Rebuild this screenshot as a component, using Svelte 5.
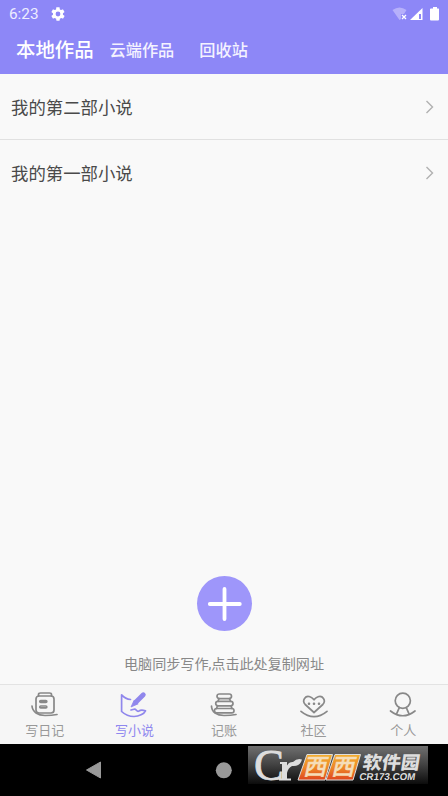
<script>
	const heads = ['本地作品', '云端作品', '回收站'];
	const novels = ['我的第二部小说', '我的第一部小说'];
	const tabs = [
		{ id: 'diary', label: '写日记' },
		{ id: 'novel', label: '写小说' },
		{ id: 'bill', label: '记账' },
		{ id: 'community', label: '社区' },
		{ id: 'me', label: '个人' }
	];
	let head = $state(0);
	let active = $state('novel');
</script>

<div class="phone">
	<header>
		<div class="status">
			<span class="time">6:23</span>
			<svg class="gear" width="16" height="16" viewBox="0 0 24 24">
				<path fill="#fff" fill-rule="evenodd" d="M19.4 13a7.6 7.6 0 0 0 0-2l2.1-1.6c.2-.2.3-.5.1-.7l-2-3.4c-.1-.2-.4-.3-.6-.2l-2.5 1a7.3 7.3 0 0 0-1.7-1l-.4-2.6c0-.3-.2-.5-.5-.5h-4c-.2 0-.5.2-.5.4L9.100 5.100c-.6.2-1.2.6-1.7 1l-2.5-1c-.2-.1-.5 0-.6.2l-2 3.4c-.1.2-.1.5.1.7L4.500 11a7.600 7.600 0 0 0 0 2l-2.1 1.6c-.2.2-.2.5-.1.7l2 3.4c.1.2.4.3.6.2l2.500-1c.5.4 1.1.8 1.7 1l.4 2.6c0 .3.3.5.5.5h4c.3 0 .5-.2.5-.5l.4-2.6c.6-.2 1.2-.6 1.7-1l2.500 1c.2.1.5 0 .6-.2l2-3.400c.1-.2.1-.5-.1-.7zM12 15.600a3.600 3.600 0 1 1 0-7.200 3.600 3.600 0 0 1 0 7.200z" />
			</svg>
			<svg class="signals" width="50" height="16" viewBox="0 0 50 16">
				<path d="M.5 4Q7.500-1 14.500 4L12 8H9v5L7.500 14z" fill="#b6b0fb" />
				<path d="M10 9l4 4M14 9l-4 4" stroke="#fff" stroke-width="1.3" />
				<path d="M18 14L30.500 2v12z" fill="#fff" />
				<path d="M27 8h2v5h-2z" fill="#8d87f7" />
				<path d="M39 2.500h2V1h4v1.500h1.500q.5 0 .5.500v10.500q0 1-1 1h-7q-1 0-1-1V3q0-.5 1-.5z" fill="#fff" />
			</svg>
		</div>
		<nav class="heads">
			{#each heads as name, i}
				<button class:current={head === i} onclick={() => (head = i)}>{name}</button>
			{/each}
		</nav>
	</header>

	<main>
		<ul>
			{#each novels as title}
				<li>
					<span>{title}</span>
					<svg width="10" height="16" viewBox="0 0 10 16">
						<path d="M1.500 2l6 6-6 6" fill="none" stroke="#b0b0b0" stroke-width="1.4" />
					</svg>
				</li>
			{/each}
		</ul>
		<div class="create">
			<button class="add" aria-label="新建">
				<svg width="55" height="55" viewBox="0 0 55 55">
					<path d="M27.500 13v30M12.800 28h30" stroke="#fff" stroke-width="3.8" stroke-linecap="round" />
				</svg>
			</button>
			<p>电脑同步写作,点击此处复制网址</p>
		</div>
	</main>

	<nav class="tabs">
		{#each tabs as tab}
			<button class:active={active === tab.id} onclick={() => (active = tab.id)}>
				<svg class="icon" width="30" height="30" viewBox="0 0 30 30">
					{#if tab.id === 'diary'}
						<path d="M8.500 6V4.500Q8.500 3 10.500 3h9q2 0 2 1.500V6" />
						<rect x="6" y="6" width="18" height="17" rx="3" />
						<rect x="9.800" y="10.600" width="7" height="1.800" rx=".9" />
						<rect x="9.800" y="16" width="7" height="1.800" rx=".9" />
						<path d="M2 16C2.500 22 8 25.500 15 25.500Q22 25.500 27 24.500" />
					{:else if tab.id === 'novel'}
						<path d="M11.500 9.500Q6.500 9 2.600 4.800V21.500Q8 26.500 15 26.500C20 26.500 25 24 26.500 20.800Q22 19.500 20 21C17.500 22.500 17.500 18.500 15 19.200L12 20" />
						<path d="M17 12L24.300 4.700" stroke-width="4.800" />
						<path d="M15 10.500L12 17 18.800 14z" class="nib" />
					{:else if tab.id === 'bill'}
						<rect x="8" y="4" width="14.500" height="4.600" rx="2.300" />
						<rect x="6.700" y="11.300" width="17.300" height="4.600" rx="2.300" />
						<rect x="5.500" y="18.500" width="19.500" height="4.300" rx="2.100" />
						<path d="M10 8.600l-1 2.700M20.500 8.600l1 2.700M8.500 15.900l-1 2.600M22 15.900l1 2.600" />
						<path d="M2.500 16C2.500 22 8 25.500 15 25.500Q22 25.500 27 24.500" />
					{:else if tab.id === 'community'}
						<path d="M15 22.500L6.200 14.500C2.500 10.500 6.500 5 11 6.800Q13 7.500 15 9.800Q17 7.500 19 6.800C23.500 5 27.500 10.500 23.800 14.500z" />
						<path d="M9.900 13.800h.2M14.900 13.800h.2M19.900 13.800h.2" stroke-width="2.400" />
						<path d="M2 21.300Q15 32 28 21.300" />
					{:else}
						<circle cx="14.800" cy="10.800" r="7.600" />
						<path d="M2.500 21Q14.800 30.500 27 21M11.300 17.600L8.700 23.700M18.300 17.600l2.600 6.100" />
					{/if}
				</svg>
				<span>{tab.label}</span>
			</button>
		{/each}
	</nav>

	<footer>
		<svg width="448" height="52" viewBox="0 0 448 52">
			<path d="M86.500 26L100.500 18v16z" fill="#999" stroke="#999" stroke-linejoin="round" />
			<circle cx="223.800" cy="26.300" r="8" fill="#999" />
		</svg>
		<svg class="brand" width="180" height="38" viewBox="0 0 180 38">
			<defs>
				<linearGradient id="plate" x2="0" y2="1">
					<stop stop-color="#707070" />
					<stop offset=".5" stop-color="#414141" />
					<stop offset="1" stop-color="#0c0c0c" />
				</linearGradient>
				<linearGradient id="orange" x2="0" y2="1">
					<stop stop-color="#f3ae2d" />
					<stop offset=".5" stop-color="#ee8928" />
					<stop offset="1" stop-color="#df461d" />
				</linearGradient>
			</defs>
			<rect width="180" height="38" fill="url(#plate)" />
			<text class="cap" x="6" y="34" textLength="30" lengthAdjust="spacingAndGlyphs">C</text>
			<path d="M32 16h7v16.500h4v2h-12v-2h3V18h-2zM38 22Q40 15.500 45 16Q49 12 54 13.500Q52 21 44 20Q40 22 39 27z" fill="#ddd" />
			<path d="M59 8.500h25.500L77 34H50z" fill="url(#orange)" stroke="#ddd" />
			<path d="M87 8.500h25.500L105 34H78z" fill="url(#orange)" stroke="#ddd" />
			<g transform="translate(55 28.500) skewX(-13)"><text class="west" textLength="23" lengthAdjust="spacingAndGlyphs">西</text></g>
			<g transform="translate(83 28.500) skewX(-13)"><text class="west" textLength="23" lengthAdjust="spacingAndGlyphs">西</text></g>
			<g transform="translate(114 22.500) skewX(-9)"><text class="soft" textLength="57" lengthAdjust="spacingAndGlyphs">软件园</text></g>
			<g transform="translate(111 34) skewX(-8)"><text class="domain" textLength="56" lengthAdjust="spacingAndGlyphs">CR173.COM</text></g>
		</svg>
	</footer>
</div>

<style>
	:global(body) { margin: 0; }
	.phone {
		width: 448px; height: 796px; overflow: hidden;
		display: flex; flex-direction: column;
		background: #f9f9f9; color: #4a4a4a;
		font-family: Roboto, "Noto Sans CJK SC", sans-serif;
	}
	button { border: 0; padding: 0; background: none; color: inherit; font: inherit; cursor: pointer; }
	svg { display: block; }
	header { height: 74px; flex: none; background: #8d87f7; color: #fff; }
	.status { height: 27px; display: flex; align-items: center; padding: 0 6px 0 9px; }
	.time { font-size: 15.3px; width: 41px; color: #eeedff; }
	.signals { margin-left: auto; }
	.heads { height: 48px; display: flex; align-items: center; padding-left: 16px; }
	.heads button { font-size: 16.2px; font-weight: 500; margin-right: 25px; line-height: 28px; color: #f4f2ff; }
	.heads .current { font-size: 19.4px; margin-right: 16px; color: #fff; }
	main { flex: 1; display: flex; flex-direction: column; }
	ul { list-style: none; margin: 0; padding: 0; }
	li {
		height: 65px; display: flex; align-items: center; justify-content: space-between;
		padding: 0 13px 0 11px; border-bottom: 1px solid #e1e1e1; font-size: 17.4px;
	}
	li:last-child { border-color: transparent; }
	.create { margin-top: auto; display: flex; flex-direction: column; align-items: center; color: #888; }
	.add { width: 55px; height: 55px; border-radius: 50%; background: #9e96fa; }
	.create p { margin: 23px 0 9px; font-size: 14.1px; line-height: 21px; }
	.tabs {
		height: 59px; flex: none; display: flex; background: #f6f6f6;
		border-top: 1px solid #e3e3e3; color: #999;
	}
	.tabs button { flex: 1; display: flex; flex-direction: column; align-items: center; justify-content: flex-start; padding-top: 5px; }
	.tabs span { font-size: 13px; line-height: 21px; }
	.icon { fill: none; stroke: #888; stroke-width: 1.7; stroke-linecap: round; stroke-linejoin: round; }
	.active { color: #8f88ef; }
	.active .icon { stroke: #9087ec; }
	.nib { fill: #9087ec; stroke-width: .8; }
	footer { height: 52px; flex: none; position: relative; background: #000; }
	/* site mark sits over the system bar */
	.brand { position: absolute; left: 248px; top: 2px; overflow: visible; }
	.cap { font: 44px "Liberation Serif", serif; fill: #ddd; stroke: #ddd; stroke-width: .8; }
	.west { font: 500 23px "Noto Sans CJK SC", sans-serif; fill: #f5ddb8; stroke: #f5ddb8; stroke-width: .5; }
	.soft { font: 900 18px "Noto Sans CJK SC", sans-serif; fill: #ddd; }
	.domain { font: bold 10px "Liberation Sans", sans-serif; fill: #ddd; }
</style>
